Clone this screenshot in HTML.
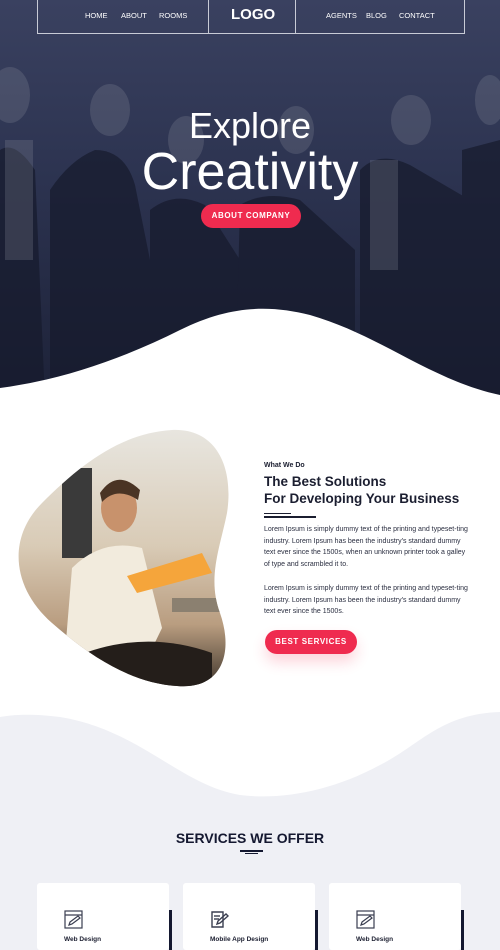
<!DOCTYPE html>
<html><head><meta charset="utf-8"><style>
*{margin:0;padding:0;box-sizing:border-box}
html,body{width:500px;height:950px;overflow:hidden}
body{background:#fff;font-family:"Liberation Sans",sans-serif;position:relative}
.abs{position:absolute}
.hero{left:0;top:0;width:500px;height:400px;background:linear-gradient(180deg,#3a4160 0%,#2c3350 45%,#1d2238 100%);overflow:hidden}
.nav{left:37px;top:0;width:428px;height:34px;border:1px solid #c8cbd6;border-top:none}
.nav a{position:absolute;top:11px;color:#fff;font-size:7.5px;text-decoration:none}
.btn{background:#ef2b4f;color:#fff;border-radius:14px;text-align:center;font-weight:bold;letter-spacing:.6px}
p.t{font-size:7px;line-height:11.7px;color:#2a2e40}
.card{top:883px;width:132px;height:67px;background:#fff;border-radius:3px}
.card .edge{position:absolute;right:-3px;top:27px;width:3px;height:40px;background:#141830}
.card .lab{position:absolute;left:27px;top:53px;font-size:6.5px;font-weight:bold;color:#1b1e30}
</style></head><body>
<div class="abs hero">
  <svg width="500" height="400" class="abs" style="left:0;top:0">
    <g fill="#161a2c" opacity=".7">
      <path d="M0 150 Q15 140 35 170 L45 400 L0 400Z"/>
      <path d="M50 190 Q70 160 95 150 Q125 150 135 185 L150 260 L155 400 L50 400Z"/>
      <path d="M150 210 Q175 190 205 205 L240 260 L240 400 L150 400Z"/>
      <path d="M240 205 Q265 190 300 200 L355 250 L355 400 L235 400Z"/>
      <path d="M360 170 Q380 150 410 165 L470 200 L470 400 L360 400Z"/>
      <path d="M462 150 L500 140 L500 400 L462 400Z"/>
    </g>
    <g fill="#8a8e9c" opacity=".25">
      <ellipse cx="10" cy="95" rx="20" ry="28"/><ellipse cx="110" cy="110" rx="20" ry="26"/>
      <ellipse cx="186" cy="140" rx="18" ry="24"/><ellipse cx="296" cy="130" rx="18" ry="24"/>
      <ellipse cx="411" cy="120" rx="20" ry="25"/><ellipse cx="490" cy="100" rx="15" ry="25"/>
      <rect x="5" y="140" width="28" height="120"/><rect x="370" y="160" width="28" height="110"/>
    </g>
  </svg>
  <div class="abs nav">
    <div class="abs" style="left:170px;top:0;width:1px;height:34px;background:#c8cbd6"></div>
    <div class="abs" style="left:257px;top:0;width:1px;height:34px;background:#c8cbd6"></div>
    <a style="left:47px">HOME</a><a style="left:83px">ABOUT</a><a style="left:121px">ROOMS</a>
    <a style="left:193px;top:6px;font-size:15px;font-weight:bold">LOGO</a>
    <a style="left:288px">AGENTS</a><a style="left:328px">BLOG</a><a style="left:361px">CONTACT</a>
  </div>
  <div class="abs" style="left:0;width:500px;top:106px;text-align:center;color:#fff;font-size:36px;line-height:40px">Explore</div>
  <div class="abs" style="left:0;width:500px;top:145px;text-align:center;color:#fff;font-size:52px;line-height:54px">Creativity</div>
  <div class="abs btn" style="left:201px;top:204px;width:100px;height:24px;line-height:24px;font-size:8px">ABOUT COMPANY</div>
</div>
<svg class="abs" style="left:0;top:300px" width="500" height="110">
  <path d="M0 88 C60 80 120 60 180 30 C230 5 270 5 310 15 C380 35 430 80 500 95 L500 110 L0 110Z" fill="#fff"/>
</svg>
<svg class="abs" style="left:12px;top:428px" width="230" height="262">
  <defs><linearGradient id="g" x1="0" y1="0" x2="0" y2="1">
    <stop offset="0" stop-color="#e8e6e0"/><stop offset=".45" stop-color="#d9cbb6"/><stop offset=".75" stop-color="#b99d80"/><stop offset="1" stop-color="#3a3128"/></linearGradient>
  <clipPath id="c"><path d="M160 2 C205 0 222 40 215 85 C208 120 195 150 208 185 C222 225 210 262 165 258 C120 255 80 230 40 195 C0 160 -5 110 30 75 C70 35 110 5 160 2Z"/></clipPath></defs>
  <g clip-path="url(#c)">
    <rect width="230" height="262" fill="url(#g)"/>
    <rect x="50" y="40" width="30" height="90" fill="#3a3a3a"/>
    <path d="M60 140 Q90 110 130 120 L150 200 L120 262 L50 262Z" fill="#f2ebdd"/>
    <ellipse cx="107" cy="80" rx="18" ry="24" fill="#c8926c"/>
    <path d="M88 65 Q105 40 128 62 L126 72 Q105 58 90 74Z" fill="#4a3424"/>
    <path d="M115 148 L190 125 L200 145 L125 165Z" fill="#f5a53b"/>
    <path d="M60 230 Q130 200 200 225 L200 262 L60 262Z" fill="#241e1a"/>
    <rect x="160" y="170" width="50" height="14" fill="#8b8070"/>
  </g>
</svg>
<div class="abs" style="left:264px;top:462px;font-size:7px;font-weight:bold;color:#1b1e30">What We Do</div>
<div class="abs" style="left:264px;top:474px;font-size:13.5px;line-height:16.5px;font-weight:bold;color:#1b1e30">The Best Solutions<br>For Developing Your Business</div>
<div class="abs" style="left:264px;top:516px;width:52px;height:1.5px;background:#1b1e30"></div>
<div class="abs" style="left:264px;top:513px;width:27px;height:1px;background:#1b1e30"></div>
<p class="t abs" style="left:264px;top:524px;width:206px">Lorem Ipsum is simply dummy text of the printing and typeset-ting industry. Lorem Ipsum has been the industry's standard dummy text ever since the 1500s, when an unknown printer took a galley of type and scrambled it to.</p>
<p class="t abs" style="left:264px;top:583px;width:206px">Lorem Ipsum is simply dummy text of the printing and typeset-ting industry. Lorem Ipsum has been the industry's standard dummy text ever since the 1500s.</p>
<div class="abs btn" style="left:265px;top:630px;width:92px;height:24px;line-height:24px;font-size:8px;box-shadow:0 8px 14px rgba(239,43,79,.2)">BEST SERVICES</div>
<div class="abs" style="left:0;top:712px;width:500px;height:238px;background:#eff0f5"></div>
<svg class="abs" style="left:0;top:700px" width="500" height="100">
  <path d="M0 0 L500 0 L500 12 C440 14 420 45 380 65 C330 92 280 100 240 95 C180 85 140 30 60 17 C30 13 10 15 0 17Z" fill="#fff"/>
</svg>
<div class="abs" style="left:0;width:500px;top:830px;text-align:center;font-size:14px;font-weight:bold;color:#141830">SERVICES WE OFFER</div>
<div class="abs" style="left:240px;top:850px;width:23px;height:1.5px;background:#141830"></div>
<div class="abs" style="left:245px;top:853px;width:13px;height:1px;background:#141830"></div>
<div class="abs card" style="left:37px"><div class="edge"></div>
  <svg class="abs" style="left:27px;top:27px" width="19" height="19" fill="none" stroke="#3a3e50" stroke-width="1.2"><rect x="1" y="1" width="17" height="17"/><line x1="1" y1="5" x2="18" y2="5"/><path d="M5 15 L6 12 L14 6 L16 8 L8 14Z"/></svg>
  <div class="lab">Web Design</div></div>
<div class="abs card" style="left:183px"><div class="edge"></div>
  <svg class="abs" style="left:27px;top:27px" width="19" height="19" fill="none" stroke="#3a3e50" stroke-width="1.4"><path d="M2 2 H13 V17 H2Z"/><line x1="4" y1="6" x2="10" y2="6"/><line x1="4" y1="9" x2="9" y2="9"/><path d="M7 14 L8 11 L16 4 L18 6 L10 13Z"/></svg>
  <div class="lab">Mobile App Design</div></div>
<div class="abs card" style="left:329px"><div class="edge"></div>
  <svg class="abs" style="left:27px;top:27px" width="19" height="19" fill="none" stroke="#3a3e50" stroke-width="1.2"><rect x="1" y="1" width="17" height="17"/><line x1="1" y1="5" x2="18" y2="5"/><path d="M5 15 L6 12 L14 6 L16 8 L8 14Z"/></svg>
  <div class="lab">Web Design</div></div>
</body></html>
